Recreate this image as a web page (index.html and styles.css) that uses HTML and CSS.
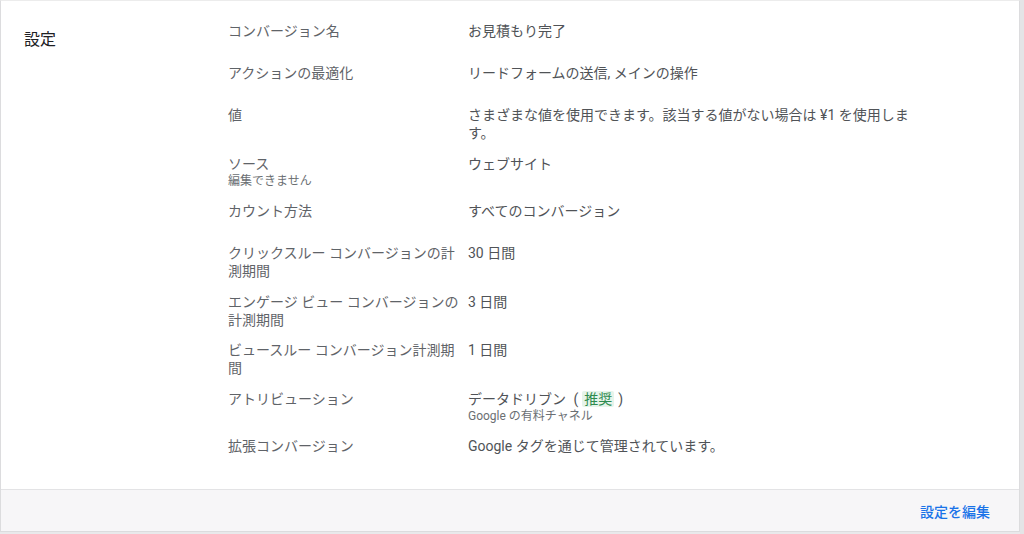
FILE: index.html
```html
<!DOCTYPE html>
<html lang="ja">
<head>
<meta charset="utf-8">
<title>設定</title>
<link rel="stylesheet" href="styles.css">
</head>
<body>
<div class="page">
  <section class="card">
    <div class="card-body">
      <h2 class="section-title">設定</h2>
      <div class="rows">
        <div class="row">
          <div class="label">コンバージョン名</div>
          <div class="value">お見積もり完了</div>
        </div>
        <div class="row">
          <div class="label">アクションの最適化</div>
          <div class="value">リードフォームの送信, メインの操作</div>
        </div>
        <div class="row">
          <div class="label">値</div>
          <div class="value">さまざまな値を使用できます。該当する値がない場合は ¥1 を使用します。</div>
        </div>
        <div class="row">
          <div class="label">ソース<div class="sub">編集できません</div></div>
          <div class="value">ウェブサイト</div>
        </div>
        <div class="row">
          <div class="label">カウント方法</div>
          <div class="value">すべてのコンバージョン</div>
        </div>
        <div class="row">
          <div class="label">クリックスルー コンバージョンの計測期間</div>
          <div class="value">30 日間</div>
        </div>
        <div class="row">
          <div class="label">エンゲージ ビュー コンバージョンの計測期間</div>
          <div class="value">3 日間</div>
        </div>
        <div class="row">
          <div class="label">ビュースルー コンバージョン計測期間</div>
          <div class="value">1 日間</div>
        </div>
        <div class="row">
          <div class="label">アトリビューション</div>
          <div class="value">データドリブン <span class="paren">(</span><span class="chip">推奨</span><span class="paren">)</span><div class="sub">Google の有料チャネル</div></div>
        </div>
        <div class="row">
          <div class="label">拡張コンバージョン</div>
          <div class="value">Google タグを通じて管理されています。</div>
        </div>
      </div>
    </div>
    <div class="card-footer">
      <a class="edit-link" href="#">設定を編集</a>
    </div>
  </section>
  <div class="edge"></div>
</div>
</body>
</html>
```

FILE: styles.css
```css
* { box-sizing: border-box; }

html, body {
  margin: 0;
  padding: 0;
  background: #e9e9eb;
  font-family: Roboto, "Noto Sans CJK JP", "Noto Sans", sans-serif;
}

.page {
  display: flex;
  align-items: flex-start;
  height: 534px;
}

.card {
  width: 1020px;
  background: #ffffff;
  border: 1px solid #dcdcde;
  border-top-color: #ececec;
}

.card-body {
  display: flex;
  padding: 15px 0 16px 23px;
}

.section-title {
  margin: 0;
  width: 204px;
  padding-top: 12px;
  font-size: 16px;
  line-height: 24px;
  font-weight: 400;
  color: #202124;
}

.rows {
  display: flex;
  flex-direction: column;
}

.row {
  display: flex;
  gap: 4px;
  min-height: 42px;
  padding: 6px 0 7px;
  font-size: 14px;
  line-height: 18px;
}

.row:nth-child(7) {
  padding-bottom: 6px;
}

.label {
  width: 236px;
  color: #5f6368;
}

.value {
  width: 456px;
  color: #505357;
}

.sub {
  font-size: 12px;
  line-height: 16px;
  color: #6b6f73;
}

.paren {
  padding: 0 4px;
}

.chip {
  background: #e6f4ea;
  color: #2e8b4f;
  padding: 0 2px;
  border-radius: 2px;
}

.card-footer {
  display: flex;
  justify-content: flex-end;
  align-items: center;
  height: 42px;
  padding-right: 29px;
  background: #f7f6f8;
  border-top: 1px solid #e3e3e5;
}

.edit-link {
  font-size: 14px;
  font-weight: 500;
  color: #1a73e8;
  text-decoration: none;
}

.edge {
  flex: 1;
  align-self: stretch;
  background: #e4e4e6;
}
```
